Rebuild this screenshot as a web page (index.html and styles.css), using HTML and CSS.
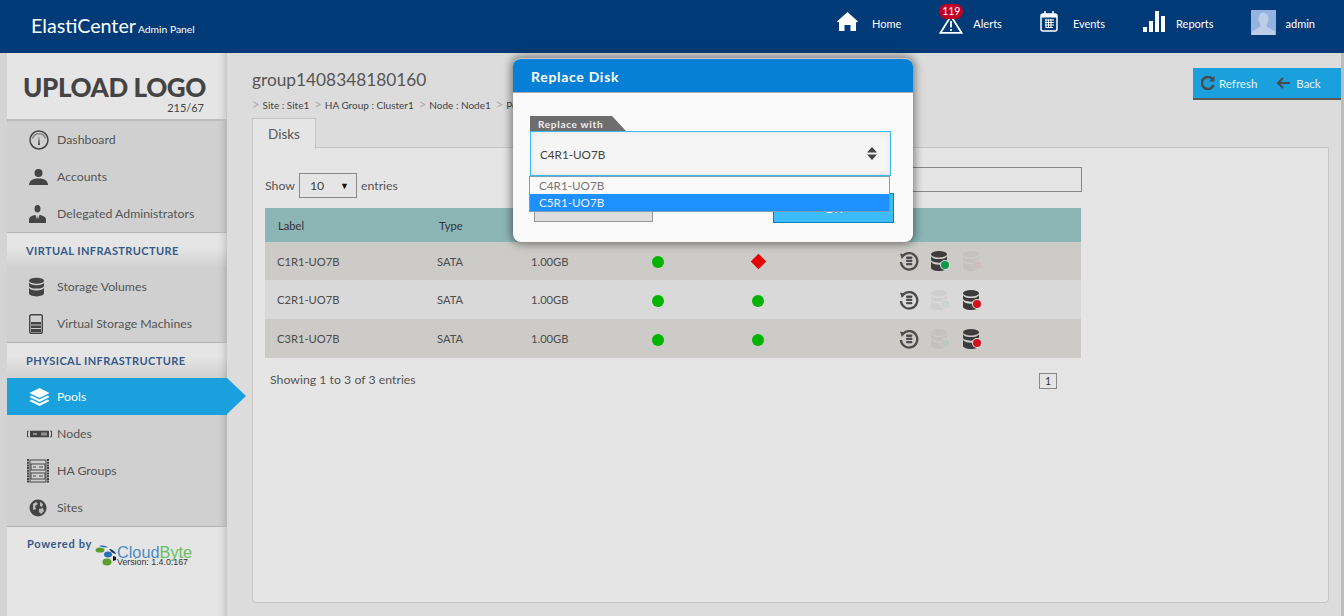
FILE: index.html
```html
<!DOCTYPE html>
<html lang="en">
<head>
<meta charset="UTF-8" />
<title>ElastiCenter - Replace Disk</title>
<link rel="stylesheet" href="styles.css">
</head>
<body>

<svg class="defs" width="0" height="0">
  <symbol id="db" viewBox="0 0 16 20">
    <ellipse cx="8" cy="3.2" rx="8" ry="3.2"/>
    <path d="M0 5.2c1 2 4 2.9 8 2.900s7-.9 8-2.900v3.400c0 1.800-3.600 3.100-8 3.100s-8-1.300-8-3.100z"/>
    <path d="M0 10.800c1 2 4 2.900 8 2.900s7-.9 8-2.900v5.900c0 1.800-3.600 3.300-8 3.300s-8-1.500-8-3.300z"/>
  </symbol>
  <symbol id="restore" viewBox="0 0 20 20">
    <path d="M4.600 4.200a8.200 8.200 0 1 1-2.700 6.800" fill="none" stroke="currentColor" stroke-width="2.300"/>
    <path d="M1 2.600l5.600 1.200-3.800 4.200z" fill="currentColor"/>
    <rect x="7" y="5.600" width="6.400" height="2.300" rx="1" fill="currentColor"/>
    <rect x="7" y="8.800" width="6.400" height="2.300" rx="1" fill="currentColor"/>
    <rect x="7" y="12" width="6.400" height="2.300" rx="1" fill="currentColor"/>
  </symbol>
</svg>

<header class="topbar">
  <div class="brand">ElastiCenter<small>Admin Panel</small></div>
  <nav class="topnav">
    <a class="topnav-item">
      <svg width="21" height="19" viewBox="0 0 21 19" fill="#fff"><path d="M10.500 0L21 9.500l-1 1-1-.8V19h-5.500v-6h-6v6H2V9.700l-1 .8-1-1z"/></svg>
      <span>Home</span>
    </a>
    <a class="topnav-item alerts">
      <span class="badge">119</span>
      <svg width="24" height="20" viewBox="0 0 24 20" fill="none" stroke="#fff" stroke-width="1.800"><path d="M12 2L1.500 18.800h21z"/><path d="M12 7v6.500M12 15v2"/></svg>
      <span>Alerts</span>
    </a>
    <a class="topnav-item events">
      <svg width="18" height="21" viewBox="0 0 18 21"><rect x="1" y="3" width="16" height="17" rx="2" fill="none" stroke="#fff" stroke-width="1.500"/><rect x="1" y="3" width="16" height="3.500" fill="#fff"/><path d="M5 0v4M13 0v4" stroke="#fff" stroke-width="1.500"/><path d="M5 9h9M5 11.500h9M5 14h9M6 16.500h7M6 8v9M8.500 8v9M11 8v9" stroke="#fff" stroke-width="1"/></svg>
      <span>Events</span>
    </a>
    <a class="topnav-item reports">
      <svg width="22" height="21" viewBox="0 0 22 21" fill="#fff"><rect y="16" width="4" height="5"/><rect x="6" y="10" width="4" height="11"/><rect x="12" y="0" width="4" height="21"/><rect x="18" y="5" width="4" height="16"/></svg>
      <span>Reports</span>
    </a>
    <a class="topnav-item user">
      <svg class="avatar" width="25" height="25" viewBox="0 0 25 25"><rect width="25" height="25" fill="#94b3e0"/><ellipse cx="12.500" cy="9" rx="5" ry="6.500" fill="#bccde6"/><path d="M9.500 14v2.500L1 21.500V25h23v-3.500l-8.500-5V14z" fill="#bccde6"/></svg>
      <span>admin</span>
    </a>
  </nav>
</header>

<div class="layout">
  <aside class="sidebar">
    <div class="logo-box">
      <div class="logo-text">UPLOAD LOGO</div>
      <div class="logo-size">215/67</div>
    </div>

    <ul class="menu">
      <li>
        <svg class="ico" width="20" height="20" viewBox="0 0 20 20"><circle cx="10" cy="10" r="9" fill="none" stroke="#444" stroke-width="1.500"/><path d="M3.500 8.500a6.800 6.800 0 0 1 13 0" fill="none" stroke="#888" stroke-width="1.500"/><path d="M10 6l-1 9h2z" fill="#444"/></svg>
        Dashboard
      </li>
      <li>
        <svg class="ico" width="19" height="16" viewBox="0 0 19 16" fill="#444"><ellipse cx="9.500" cy="4" rx="4" ry="4"/><path d="M0 16c0-3.800 3-6.500 9.500-6.500S19 12.200 19 16z"/></svg>
        Accounts
      </li>
      <li>
        <svg class="ico" width="17" height="18" viewBox="0 0 17 18"><ellipse cx="8.500" cy="3.800" rx="3" ry="3.800" fill="#444"/><path d="M0 18v-3.500c0-2.500 2.500-3.500 5.500-4.500h6c3 1 5.500 2 5.500 4.500V18z" fill="#444"/><path d="M6.500 10l2 6 2-6z" fill="#ccc"/><path d="M8.500 10.500l-.7 5 .7 1.500.7-1.500z" fill="#444"/></svg>
        Delegated Administrators
      </li>
    </ul>

    <div class="menu-head">Virtual Infrastructure</div>
    <ul class="menu">
      <li>
        <svg class="ico db-ico" width="15" height="20"><use href="#db"/></svg>
        Storage Volumes
      </li>
      <li>
        <svg class="ico" width="14" height="20" viewBox="0 0 14 20"><rect x=".7" y=".7" width="12.600" height="18.600" rx="1.500" fill="none" stroke="#444" stroke-width="1.400"/><rect x="2" y="8" width="10" height="10" fill="#444"/><path d="M2 11h10M2 14.500h10" stroke="#ccc"/></svg>
        Virtual Storage Machines
      </li>
    </ul>

    <div class="menu-head">Physical Infrastructure</div>
    <ul class="menu">
      <li class="active">
        <svg class="ico" width="21" height="18" viewBox="0 0 21 18" fill="#fff"><path d="M10.500 0l10 5-10 5-10-5z"/><path d="M2.500 7.500l8 4 8-4 2 1.500-10 5-10-5z"/><path d="M2.500 11.500l8 4 8-4 2 1.500-10 5-10-5z"/></svg>
        Pools
      </li>
      <li>
        <svg class="ico ico-wide" width="25" height="7" viewBox="0 0 25 7"><path d="M2 .5H.5v6H2M23 .5h1.500v6H23" fill="none" stroke="#444"/><rect x="3" y="0" width="19" height="7" fill="#444"/><path d="M6 3.500h4M15 2v3M17 2v3M19 2v3" stroke="#ddd"/></svg>
        Nodes
      </li>
      <li>
        <svg class="ico ico-wide" width="22" height="24" viewBox="0 0 22 24"><path d="M1 0v24M21 0v24" stroke="#444" stroke-width="2" stroke-dasharray="2 .7"/><rect x="3" y="1" width="16" height="22" fill="none" stroke="#444"/><rect x="4" y="5" width="14" height="6" fill="none" stroke="#444"/><rect x="4" y="14" width="14" height="6" fill="none" stroke="#444"/><path d="M6 8h3M13 7v2M15 7v2M6 17h3M13 16v2M15 16v2" stroke="#444"/></svg>
        HA Groups
      </li>
      <li>
        <svg class="ico" width="18" height="18" viewBox="0 0 18 18"><circle cx="9" cy="9" r="8.500" fill="#444"/><path d="M4 5l3-2 2 2-3 2 1 3-3 1zM11 3l3 2-1 3-2-1zM10 10l4-1 1 3-3 3-2-2z" fill="#bbb"/></svg>
        Sites
      </li>
    </ul>

    <div class="powered">
      <span class="powered-by">Powered by</span>
      <div class="cloudbyte">
        <svg width="22" height="27" viewBox="0 0 22 27"><ellipse cx="5" cy="10" rx="4.500" ry="2.600" fill="#5a9e2c"/><ellipse cx="12" cy="22" rx="4.500" ry="3.600" fill="#5a9e2c"/><path d="M4 6c3-1 6-.5 9 1.500-3 0-6 0-9-1.500z" fill="#2a6cb8"/><ellipse cx="13" cy="14.500" rx="4" ry="3" fill="#2a6cb8"/><path d="M14 9c3 0 6 2 7 5-3-.5-5-2-7-5z" fill="#1a3a66"/><path d="M18 16l3 1v3l-3 1z" fill="#111"/></svg>
        <div class="cb-text">
          <div class="cb-name"><span class="cb-cloud">Cloud</span><span class="cb-byte">Byte</span></div>
          <div class="cb-ver">Version: 1.4.0.167</div>
        </div>
      </div>
    </div>
  </aside>

  <main class="content">
    <div class="title-row">
      <div>
        <h1 class="page-title">group1408348180160</h1>
        <div class="crumbs">
          <span class="crumb"><i>&gt;</i><b>Site :</b> Site1</span>
          <span class="crumb"><i>&gt;</i><b>HA Group :</b> Cluster1</span>
          <span class="crumb"><i>&gt;</i><b>Node :</b> Node1</span>
          <span class="crumb"><i>&gt;</i><b>Pool :</b> Pool1</span>
        </div>
      </div>
      <div class="actions">
        <a class="action">
          <svg width="14" height="14" viewBox="0 0 14 14" fill="none" stroke="#4a4a4a" stroke-width="2.600"><path d="M11.800 3.500A6 6 0 1 0 12.600 9"/><path d="M13.500 0v5.500H8" fill="#4a4a4a" stroke="none"/></svg>
          Refresh
        </a>
        <a class="action">
          <svg width="14" height="12" viewBox="0 0 14 12" fill="none" stroke="#4a4a4a" stroke-width="2"><path d="M14 6H2M7 1L2 6l5 5"/></svg>
          Back
        </a>
      </div>
    </div>

    <div class="tabs"><span class="tab">Disks</span></div>

    <section class="panel">
      <div class="table-tools">
        <label class="show">Show
          <span class="fake-select">10<em>&#9660;</em></span>
          entries
        </label>
        <input class="search" type="text">
      </div>

      <table class="disks">
        <thead>
          <tr><th>Label</th><th>Type</th><th>Size</th><th></th><th></th><th></th></tr>
        </thead>
        <tbody>
          <tr>
            <td>C1R1-UO7B</td><td>SATA</td><td>1.00GB</td>
            <td><span class="dot"></span></td>
            <td><span class="diamond"></span></td>
            <td class="ops">
              <svg class="op" width="20" height="20"><use href="#restore"/></svg>
              <span class="dbs"><svg width="16" height="20"><use href="#db"/></svg><i class="led green"></i></span>
              <span class="dbs off"><svg width="16" height="20"><use href="#db"/></svg><i class="led red"></i></span>
            </td>
          </tr>
          <tr>
            <td>C2R1-UO7B</td><td>SATA</td><td>1.00GB</td>
            <td><span class="dot"></span></td>
            <td><span class="dot"></span></td>
            <td class="ops">
              <svg class="op" width="20" height="20"><use href="#restore"/></svg>
              <span class="dbs off"><svg width="16" height="20"><use href="#db"/></svg><i class="led green"></i></span>
              <span class="dbs"><svg width="16" height="20"><use href="#db"/></svg><i class="led red"></i></span>
            </td>
          </tr>
          <tr>
            <td>C3R1-UO7B</td><td>SATA</td><td>1.00GB</td>
            <td><span class="dot"></span></td>
            <td><span class="dot"></span></td>
            <td class="ops">
              <svg class="op" width="20" height="20"><use href="#restore"/></svg>
              <span class="dbs off"><svg width="16" height="20"><use href="#db"/></svg><i class="led green"></i></span>
              <span class="dbs"><svg width="16" height="20"><use href="#db"/></svg><i class="led red"></i></span>
            </td>
          </tr>
        </tbody>
      </table>

      <div class="table-foot">
        <span>Showing 1 to 3 of 3 entries</span>
        <span class="pager">1</span>
      </div>
    </section>
  </main>
</div>

<div class="modal">
  <div class="modal-head">Replace Disk</div>
  <div class="modal-body">
    <div class="legend">Replace with</div>
    <div class="select-box">
      <span>C4R1-UO7B</span>
      <svg width="10" height="13" viewBox="0 0 10 13" fill="#444"><path d="M5 0l5 5.500H0zM0 7.500h10L5 13z"/></svg>
    </div>
    <ul class="dropdown">
      <li>C4R1-UO7B</li>
      <li class="selected">C5R1-UO7B</li>
    </ul>
    <div class="modal-btns">
      <button class="btn-cancel" aria-label="Cancel"></button>
      <button class="btn-ok">OK</button>
    </div>
  </div>
</div>

</body>
</html>
```

FILE: styles.css
```css
* { box-sizing: border-box; }
html, body { height: 100%; }
body { margin: 0; height: 616px; overflow: hidden; background: #dcdcdc; color: #555; font-family: Lato, "Noto Sans", sans-serif; font-size: 12.300px; display: flex; flex-direction: column; position: relative; }
ul { list-style: none; margin: 0; padding: 0; }
.defs { position: absolute; }

/* top bar */
.topbar { height: 53px; flex: none; background: #003b77; color: #fff; display: flex; justify-content: space-between; }
.brand { font-size: 19.700px; padding: 14px 0 0 31px; }
.brand small { font-size: 10.300px; margin-left: 2px; }
.topnav { display: flex; gap: 38px; padding: 10px 29px 0 0; }
.topnav-item { display: flex; align-items: flex-start; gap: 14px; font-size: 11px; line-height: 28px; height: 28px; position: relative; }
.topnav-item svg { margin-top: 2px; }
.topnav-item svg.avatar { margin: 0 -4px 0 0; }
.alerts { gap: 10px; }
.alerts svg { margin-top: 4px; }
.events { gap: 15px; }
.events svg, .reports svg { margin-top: 1px; }
.reports { gap: 11px; }
.user { margin-left: -1px; }
.badge { position: absolute; left: 0; top: -6px; width: 24px; height: 15px; border-radius: 8px; background: #c00024; font-size: 10.500px; line-height: 15px; text-align: center; z-index: 1; }

.layout { flex: 1; display: flex; min-height: 0; padding-left: 7px; background: #d4d4d4; }

/* sidebar */
.sidebar { width: 220px; flex: none; background: #e5e5e5; display: flex; flex-direction: column; position: relative; box-shadow: inset -9px 0 8px -8px rgba(0,0,0,.22); }
.logo-box { height: 68px; flex: none; border-bottom: 2px solid #bdbdbd; padding: 17px 0 0 16px; color: #444; position: relative; }
.logo-text { font-size: 26px; font-weight: 900; line-height: 34px; letter-spacing: -.4px; white-space: nowrap; }
.logo-size { font-size: 11px; position: absolute; right: 23px; top: 48px; }
.menu { background: #d0d0d0; border-bottom: 1px solid #b5b5b5; box-shadow: inset -9px 0 8px -8px rgba(0,0,0,.22); }
.menu li { height: 37px; display: flex; align-items: center; padding: 0 0 1px 50px; position: relative; color: #555; }
.menu .ico { position: absolute; left: 22px; top: 50%; transform: translateY(-50%); }
.menu .ico-wide { left: 20px; }
.db-ico { fill: #444; }
.menu li.active { background: #1aa1dd; color: #fff; }
.menu li.active::after { content: ""; position: absolute; left: 220px; top: 0; border-left: 19px solid #1aa1dd; border-top: 18.500px solid transparent; border-bottom: 18.500px solid transparent; }
.menu-head { height: 35px; flex: none; padding: 11px 0 0 19px; background: linear-gradient(#e5e5e5 40%, #d0d0d0); font-size: 11px; font-weight: 700; letter-spacing: .4px; text-transform: uppercase; color: #345a8a; box-shadow: inset -9px 0 8px -8px rgba(0,0,0,.22); }
.powered { padding: 9px 0 0 20px; position: relative; }
.powered-by { font-size: 11px; font-weight: 700; letter-spacing: .7px; color: #345a8a; }
.cloudbyte { position: absolute; left: 88px; top: 13px; display: flex; }
.cloudbyte svg { flex: none; }
.cb-text { margin-top: 7px; white-space: nowrap; }
.cb-name { font: 16.300px/11px "Liberation Sans", sans-serif; height: 11px; display: flex; }
.cb-cloud { color: #4a8cc5; display: block; height: 11px; }
.cb-byte { color: #6abf5a; display: block; height: 11px; }
.cb-ver { font: 8.800px/9px "Liberation Sans", sans-serif; color: #333; }

/* main */
.content { flex: 1; min-width: 0; padding: 15px 12px 13px 25px; background: #dcdcdc; border-right: 3px solid #bdbdbd; display: flex; flex-direction: column; }
.title-row { display: flex; justify-content: space-between; height: 50px; }
.page-title { margin: 0; font-size: 17.300px; font-weight: 400; line-height: 24px; color: #555; }
.crumbs { display: flex; gap: 5px; font-size: 10px; margin-top: 7px; color: #444; white-space: nowrap; }
.crumb i { font-style: normal; color: #aaa; font-size: 13px; margin-right: 3px; line-height: 10px; }
.crumb b { font-weight: 400; }
.actions { width: 148px; height: 32px; margin-right: -12px; background: #1aa1dd; border-bottom: 2px solid #5a5a5a; display: flex; align-items: center; gap: 19px; padding-left: 8px; color: #e6f4fb; font-size: 11.500px; }
.action { display: flex; align-items: center; gap: 4px; }
.action svg { flex: none; }
.action + .action { gap: 6px; }
.tabs { height: 30px; display: flex; margin-bottom: -1px; position: relative; z-index: 1; }
.tab { width: 64px; height: 31px; background: #e5e5e5; border: 1px solid #c8c4c4; border-bottom: 0; text-align: center; line-height: 30px; font-size: 13.500px; color: #555; }
.panel { flex: 1; background: #e5e5e5; border: 1px solid #c8c4c4; border-radius: 0 0 4px 4px; padding: 19px 0 0 12px; }
.table-tools { height: 41px; display: flex; justify-content: space-between; width: 817px; }
.show { display: flex; align-items: center; height: 26px; margin-top: 5px; gap: 4px; }
.fake-select { width: 58px; height: 25px; border: 1px solid #888; display: flex; justify-content: space-between; align-items: center; padding: 0 7px 0 10px; color: #444; }
.fake-select em { font-style: normal; font-size: 9px; color: #111; }
.search { width: 230px; height: 25px; background: transparent; border: 1px solid #888; }
.disks { width: 816px; border-collapse: collapse; table-layout: fixed; font-size: 11.200px; }
.disks th:nth-child(1) { width: 160px; }
.disks th:nth-child(2) { width: 92px; padding-left: 14px; }
.disks th:nth-child(3) { width: 123px; }
.disks th:nth-child(4) { width: 100px; }
.disks th:nth-child(5) { width: 147px; }
.disks th { height: 34px; background: #8cb6b6; font-weight: 400; text-align: left; padding: 0 0 0 13px; color: #333; }
.disks td { height: 39px; padding: 0 0 0 12px; color: #4c4c4c; background: #d9d9d9; }
.disks td:nth-child(3) { padding-left: 14px; }
.disks tbody tr:nth-child(odd) td { background: #cdcbc8; }
.disks tbody tr:first-child td { height: 38px; }
.dot { display: block; width: 12px; height: 12px; border-radius: 50%; background: #00b400; margin-top: 2px; }
.diamond { display: block; width: 11px; height: 11px; margin: 1px 0 0 1px; background: #e60000; transform: rotate(45deg); }
.ops { color: #3c3c3c; white-space: nowrap; }
.ops > * { vertical-align: middle; }
.op { margin-right: 9px; }
.dbs { display: inline-block; position: relative; width: 20px; height: 20px; margin-right: 9px; fill: #3c3c3c; }
.dbs svg { display: block; }
.dbs.off { opacity: .06; }
.led { position: absolute; left: 10px; top: 10px; width: 8px; height: 8px; border-radius: 50%; box-shadow: 0 0 0 1px #ddd; }
.led.green { background: #0a9a45; }
.led.red { background: #d4121c; }
.table-foot { width: 792px; display: flex; justify-content: space-between; padding: 14px 0 0 5px; font-size: 12.300px; }
.pager { width: 18px; height: 16px; margin-top: 1px; border: 1px solid #888; text-align: center; font-size: 10.500px; line-height: 14px; color: #333; }

/* modal */
.modal { position: absolute; left: 513px; top: 58px; width: 400px; height: 184px; background: #fafafa; border-radius: 8px; box-shadow: 0 0 9px 2px rgba(0,0,0,.45); overflow: hidden; border-top: 1px solid #c4c4c4; }
.modal-head { height: 34px; background: #0580d6; border-bottom: 1px solid #aaa; color: #fff; font-weight: 700; font-size: 14px; letter-spacing: .7px; padding: 9px 0 0 18px; }
.modal-body { position: relative; padding: 23px 22px 0 17px; }
.legend { width: 96px; height: 15px; background: #6e6e6e; clip-path: polygon(0 0, 82px 0, 96px 100%, 0 100%); color: #eee; font-size: 10px; font-weight: 700; letter-spacing: .7px; line-height: 17px; padding-left: 8px; }
.select-box { height: 45px; width: 361px; border: 1px solid #3bb8ee; background: #f5f5f5; box-shadow: inset 0 0 6px rgba(0,0,0,.08); display: flex; align-items: center; justify-content: space-between; padding: 0 13px 0 9px; font-size: 11.700px; color: #444; }
.dropdown { position: absolute; left: 16px; top: 83px; width: 361px; border: 1px solid #7f9db9; background: #fafafa; font-size: 11.700px; color: #777; z-index: 2; }
.dropdown li { height: 17px; line-height: 17px; padding-left: 9px; }
.dropdown li.selected { background: #1e90ff; color: #eef; }
.modal-btns { margin-top: 17px; display: flex; justify-content: space-between; padding: 0 0 0 4px; width: 364px; }
.btn-cancel { width: 119px; height: 29px; background: #ddd; border: 1px solid #999; }
.btn-ok { width: 121px; height: 30px; padding: 1px 0 0; background: #3cbcfb; border: 1px solid #0a7fb5; font: inherit; color: #fff; }
```
